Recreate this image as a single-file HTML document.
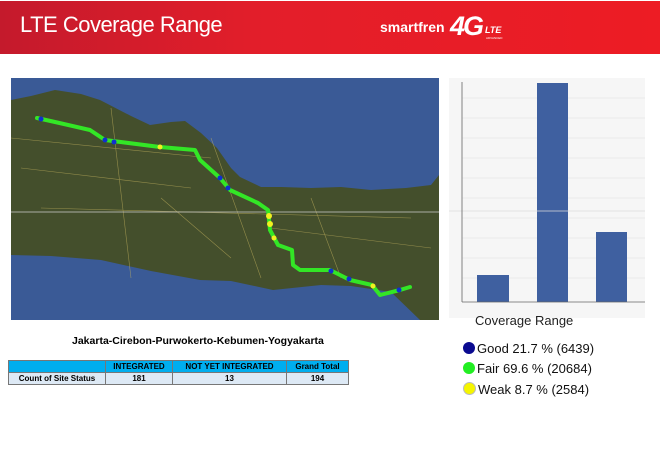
<!DOCTYPE html>
<html><head><meta charset="utf-8"><style>
body{margin:0;width:660px;height:465px;background:#fff;position:relative;overflow:hidden;font-family:"Liberation Sans",sans-serif}
.hdr{position:absolute;left:0;top:1px;width:660px;height:53px;background:linear-gradient(90deg,#c41a2c 0%,#e31e2a 40%,#ed1c24 100%)}
.hdr .t{position:absolute;left:20px;top:11px;color:#fff;font-size:22px;letter-spacing:-.5px}
.hdr .b{position:absolute;left:380px;top:18px;color:#fff;font-size:14px;font-weight:bold;letter-spacing:0}
.hdr .g{position:absolute;left:450px;top:10px;color:#fff;font-size:27px;font-weight:bold;font-style:italic;letter-spacing:-2px}
.hdr .l{position:absolute;left:485px;top:24px;color:#fff;font-size:9px;font-weight:bold;font-style:italic}
.hdr .a{position:absolute;left:486px;top:35px;color:#fff;font-size:3px}
table{position:absolute;left:8px;top:360px;border-collapse:collapse;font-size:8px;font-weight:bold;width:341px}
td{border:1px solid #777;text-align:center;height:11px;padding:0}
.cap{position:absolute;left:72px;top:335px;font-size:10.5px;font-weight:bold}
.lg{position:absolute;left:463px;font-size:13px;color:#111}
.lg i{display:inline-block;width:12px;height:12px;border-radius:50%;vertical-align:-1px;margin-right:2px}
</style></head><body>
<div class="hdr"><div class="t">LTE Coverage Range</div><div class="b">smartfren</div><div class="g">4G</div><div class="l">LTE</div><div class="a">ADVANCED</div></div>
<svg style="position:absolute;left:11px;top:78px" width="428" height="242" viewBox="0 0 428 242">
<rect width="428" height="242" fill="#3a5a96"/>
<path d="M0,22 L20,18 L44,12 L70,16 L89,22 L120,38 L139,47 L160,44 L174,43 L190,55 L206,70 L220,90 L229,99 L250,109 L270,109 L300,110 L330,109 L360,112 L395,110 L420,107 L428,97 L428,242 L409,242 L380,214 L340,208 L310,207 L262,212 L220,203 L189,202 L140,193 L90,182 L40,178 L0,177 Z" fill="#444f2c"/>
<path d="M0,60 L200,80 M30,130 L400,140 M100,30 L120,200 M200,60 L250,200 M300,120 L330,200 M10,90 L180,110 M150,120 L220,180 M260,150 L420,170" stroke="#c9b860" stroke-width="0.6" fill="none" opacity=".6"/>
<line x1="0" y1="134" x2="428" y2="134" stroke="#ccc" stroke-width="0.8"/>
<polyline points="26,40 44,44 79,52 94,62 149,69 184,72 189,82 209,100 219,112 247,125 257,132 259,152 267,167 281,172 282,187 289,192 319,192 339,202 361,207 369,217 389,212 399,209" fill="none" stroke="#33e626" stroke-width="4" stroke-linecap="round" stroke-linejoin="round"/>
<g fill="#1030d0"><circle cx="30" cy="41" r="2.5"/><circle cx="94" cy="62" r="2.5"/><circle cx="103" cy="64" r="2.5"/><circle cx="209" cy="100" r="2.5"/><circle cx="217" cy="110" r="2.5"/><circle cx="320" cy="193" r="2.5"/><circle cx="338" cy="201" r="2.5"/><circle cx="388" cy="212" r="2.5"/></g>
<g fill="#f0f020"><circle cx="149" cy="69" r="2.5"/><circle cx="258" cy="138" r="3"/><circle cx="259" cy="146" r="3"/><circle cx="263" cy="160" r="2.5"/><circle cx="362" cy="208" r="2.5"/></g>
</svg>
<svg style="position:absolute;left:449px;top:78px" width="196" height="240" viewBox="0 0 196 240">
<rect width="196" height="240" fill="#f6f6f6"/>
<g stroke="#ddd" stroke-width="0.6"><line x1="13" y1="20" x2="196" y2="20"/><line x1="13" y1="40" x2="196" y2="40"/><line x1="13" y1="60" x2="196" y2="60"/><line x1="13" y1="80" x2="196" y2="80"/><line x1="13" y1="100" x2="196" y2="100"/><line x1="13" y1="120" x2="196" y2="120"/><line x1="13" y1="140" x2="196" y2="140"/><line x1="13" y1="160" x2="196" y2="160"/><line x1="13" y1="180" x2="196" y2="180"/><line x1="13" y1="200" x2="196" y2="200"/></g>
<rect x="28" y="197" width="32" height="27" fill="#3f60a0"/>
<rect x="88" y="5" width="31" height="219" fill="#3f60a0"/>
<rect x="147" y="154" width="31" height="70" fill="#3f60a0"/>
<line x1="0" y1="133" x2="196" y2="133" stroke="#ddd" stroke-width="0.8"/>
<line x1="13" y1="4" x2="13" y2="224" stroke="#666" stroke-width="0.8"/>
<line x1="13" y1="224" x2="196" y2="224" stroke="#666" stroke-width="0.8"/>
</svg>
<div style="position:absolute;left:475px;top:313px;font-size:13px;color:#222">Coverage Range</div>
<div class="cap">Jakarta-Cirebon-Purwokerto-Kebumen-Yogyakarta</div>
<table><tr style="background:#00aeef"><td style="width:96px"></td><td style="width:66px">INTEGRATED</td><td style="width:113px">NOT YET INTEGRATED</td><td>Grand Total</td></tr>
<tr style="background:#dde9f5"><td>Count of Site Status</td><td>181</td><td>13</td><td>194</td></tr></table>
<div class="lg" style="top:341px"><i style="background:#0a0a90"></i>Good 21.7 % (6439)</div>
<div class="lg" style="top:361px"><i style="background:#22ee22"></i>Fair 69.6 % (20684)</div>
<div class="lg" style="top:382px"><i style="background:#f5f500;border:1px solid #bbb;width:11px;height:11px"></i>Weak 8.7 % (2584)</div>
</body></html>
